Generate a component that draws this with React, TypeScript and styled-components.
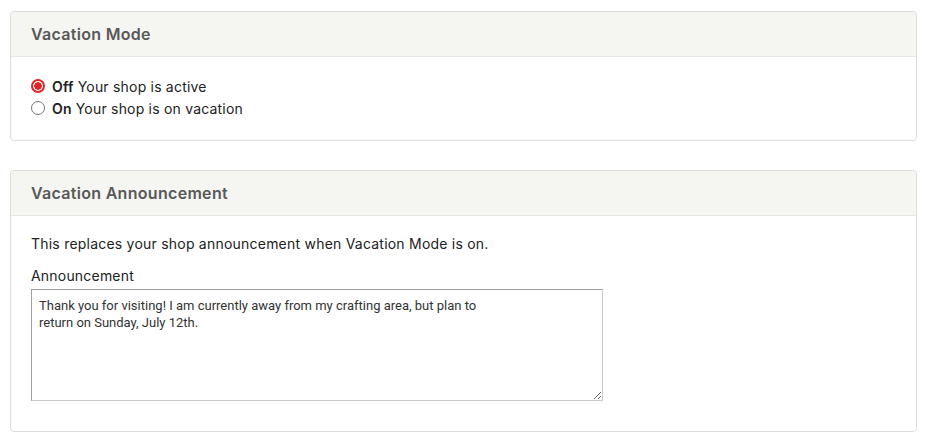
import React, { useState } from "react";
import styled, { createGlobalStyle } from "styled-components";

const GlobalStyle = createGlobalStyle`
  html, body {
    margin: 0;
    padding: 0;
    background: #fff;
  }
  body {
    font-family: Inter, "Noto Sans", sans-serif;
    color: #222;
  }
`;

const Page = styled.div`
  padding: 11px 11px 0 10px;
  display: flex;
  flex-direction: column;
  gap: 29px;
`;

const Card = styled.section`
  border: 1px solid #dcdcd8;
  border-radius: 4px;
  background: #fff;
  overflow: hidden;
`;

const CardHeader = styled.header`
  height: 44px;
  display: flex;
  align-items: center;
  padding: 0 20px;
  background: #f5f5f1;
  border-bottom: 1px solid #e6e6e2;
`;

const CardTitle = styled.h2`
  margin: 0;
  font-size: 16px;
  font-weight: 600;
  letter-spacing: 0.3px;
  color: #595959;
`;

const CardBody = styled.div<{ $pad?: string }>`
  padding: ${(p) => p.$pad || "20px"};
`;

const RadioRow = styled.label`
  display: flex;
  align-items: center;
  gap: 7px;
  font-size: 14px;
  line-height: 22px;
  letter-spacing: 0.2px;
  cursor: pointer;
  b {
    font-weight: 600;
    margin-right: 4px;
  }
`;

const Radio = styled.input`
  appearance: none;
  margin: 0;
  width: 14px;
  height: 14px;
  border-radius: 50%;
  border: 1px solid #767676;
  background: #fff;
  position: relative;
  top: -1px;
  &:checked {
    border: 2px solid #e02727;
    background: radial-gradient(circle, #e02727 0 3.5px, #fff 4px);
  }
`;

const Note = styled.p`
  margin: 0 0 12px;
  font-size: 14px;
  line-height: 22px;
  letter-spacing: 0.22px;
`;

const FieldLabel = styled.label`
  display: block;
  font-size: 14px;
  line-height: 18px;
  letter-spacing: 0.2px;
  margin-bottom: 4px;
`;

const TextArea = styled.textarea`
  display: block;
  box-sizing: border-box;
  width: 572px;
  height: 112px;
  padding: 7px 7px;
  border: 1px solid #9e9e9e;
  border-bottom-color: #c9c9c9;
  border-right-color: #c9c9c9;
  border-radius: 0;
  font-family: Roboto, "Liberation Sans", sans-serif;
  font-size: 13px;
  line-height: 17px;
  color: #333;
  resize: both;
  outline: none;
`;

export default function App() {
  const [mode, setMode] = useState("off");
  const [text, setText] = useState(
    "Thank you for visiting! I am currently away from my crafting area, but plan to\nreturn on Sunday, July 12th."
  );
  return (
    <>
      <GlobalStyle />
      <Page>
        <Card>
          <CardHeader>
            <CardTitle>Vacation Mode</CardTitle>
          </CardHeader>
          <CardBody $pad="19px 20px 20px">
            <RadioRow>
              <Radio
                type="radio"
                name="vacation"
                checked={mode === "off"}
                onChange={() => setMode("off")}
              />
              <span>
                <b>Off</b>Your shop is active
              </span>
            </RadioRow>
            <RadioRow>
              <Radio
                type="radio"
                name="vacation"
                checked={mode === "on"}
                onChange={() => setMode("on")}
              />
              <span>
                <b>On</b>Your shop is on vacation
              </span>
            </RadioRow>
          </CardBody>
        </Card>
        <Card>
          <CardHeader>
            <CardTitle>Vacation Announcement</CardTitle>
          </CardHeader>
          <CardBody $pad="17px 20px 30px">
            <Note>This replaces your shop announcement when Vacation Mode is on.</Note>
            <FieldLabel htmlFor="announcement">Announcement</FieldLabel>
            <TextArea
              id="announcement"
              value={text}
              onChange={(e) => setText(e.target.value)}
            />
          </CardBody>
        </Card>
      </Page>
    </>
  );
}
